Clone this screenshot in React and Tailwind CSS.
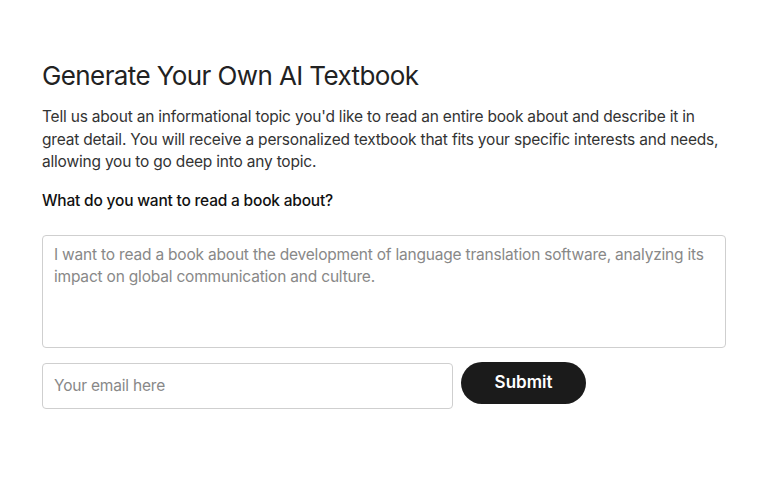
import React from "react";

const App = () => {
  return (
    <div
      className="min-h-screen bg-white px-[42px] pt-[60px] text-[#222]"
      style={{ fontFamily: "Inter, 'Noto Sans', sans-serif" }}
    >
      <h1 className="text-[26px] font-normal leading-[32px] tracking-[-0.6px] text-[#222]">
        Generate Your Own AI Textbook
      </h1>
      <p className="mt-[14px] text-[15.5px] leading-[22.5px] tracking-[-0.2px] text-[#333]">
        Tell us about an informational topic you'd like to read an entire book about and describe it in
        great detail. You will receive a personalized textbook that fits your specific interests and needs,
        allowing you to go deep into any topic.
      </p>
      <label className="mt-[16px] block text-[15.5px] font-medium leading-[22px] tracking-[-0.2px] text-[#111]">
        What do you want to read a book about?
      </label>

      {/* Topic */}
      <textarea
        className="mt-[23px] block h-[113px] w-full resize-none rounded-[4px] border border-[#cfcfcf] px-[11px] py-[8px] text-[15.5px] leading-[22px] tracking-[-0.2px] outline-none placeholder:text-[#888]"
        placeholder="I want to read a book about the development of language translation software, analyzing its impact on global communication and culture."
      />

      {/* Email + submit */}
      <div className="mt-[15px] flex items-start gap-2">
        <input
          className="h-[46px] w-[411px] rounded-[4px] border border-[#cfcfcf] px-[11px] text-[15.5px] tracking-[-0.2px] outline-none placeholder:text-[#888]"
          placeholder="Your email here"
        />
        <button className="h-[42px] w-[125px] -mt-px rounded-full bg-[#1b1b1b] text-[17px] font-semibold text-white">
          Submit
        </button>
      </div>
    </div>
  );
};

export default App;
